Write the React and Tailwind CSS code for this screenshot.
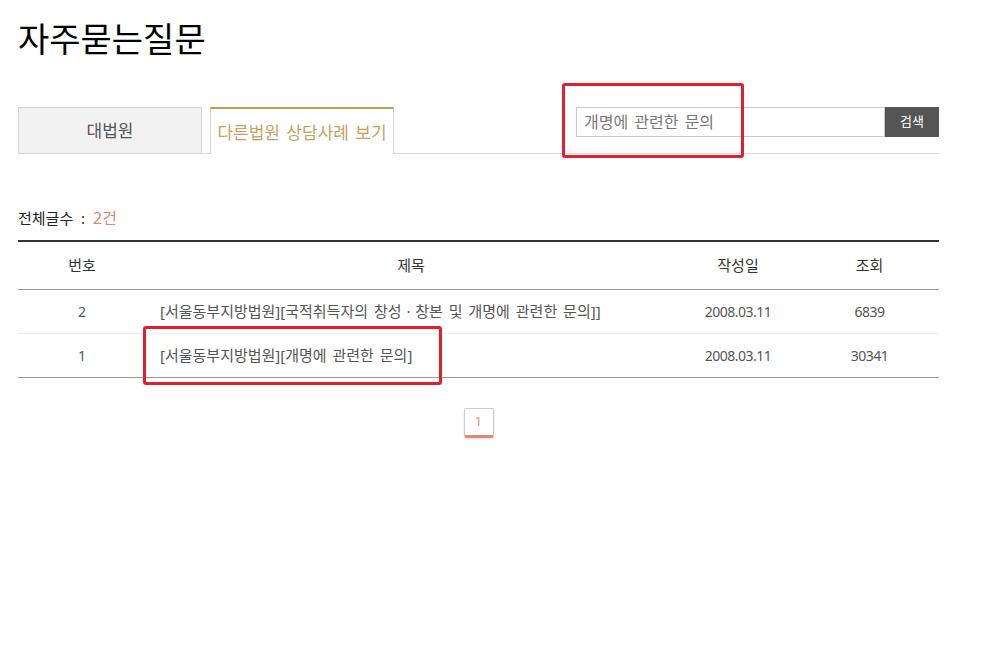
const rows = [
  { no: 2, title: "[서울동부지방법원][국적취득자의 창성ㆍ창본 및 개명에 관련한 문의]]", date: "2008.03.11", hits: "6839" },
  { no: 1, title: "[서울동부지방법원][개명에 관련한 문의]", date: "2008.03.11", hits: "30341" },
];

const App = () => {
  return (
    <div
      className="relative min-h-screen bg-white text-[#222]"
      style={{ fontFamily: '"Noto Sans", "Noto Sans CJK KR", sans-serif' }}
    >
      <div className="w-[921px] ml-[18px]">
        <h1 className="pt-[16px] text-[34px] leading-[46px] font-normal text-black">자주묻는질문</h1>

        <div className="mt-[45px] flex items-start border-b border-[#d8d8d8] h-[47px]">
          <div className="w-[184px] h-[47px] flex items-center justify-center bg-[#f2f2f2] border border-[#d5d5d5] text-[17px] text-[#555]">
            대법원
          </div>
          <div className="ml-[8px] w-[184px] h-[47px] flex items-center justify-center bg-white border-x border-[#d5d5d5] border-t-2 border-t-[#c39a55] text-[17px] text-[#c9a063] pt-[2px] [word-spacing:2px]">
            다른법원 상담사례 보기
          </div>
          <div className="ml-auto flex h-[30px]">
            <div className="w-[309px] h-[30px] border border-[#c8c8c8] flex items-center px-[7px] text-[16px] text-[#777] [word-spacing:2px]">
              개명에 관련한 문의
            </div>
            <button className="w-[54px] h-[30px] bg-[#555] text-white text-[13px]">검색</button>
          </div>
        </div>

        <div className="mt-[52px] text-[15px] text-[#222] [word-spacing:4px]">
          전체글수 : <span className="text-[16px] text-[#d98a7a]">2건</span>
        </div>

        <table className="mt-[10px] w-full border-t-2 border-[#333] border-collapse text-[14px]">
          <thead>
            <tr className="h-[48px] border-b border-[#999] text-[15px] text-[#333]">
              <th className="w-[128px] font-normal">번호</th>
              <th className="font-normal">제목</th>
              <th className="w-[124px] font-normal">작성일</th>
              <th className="w-[139px] font-normal">조회</th>
            </tr>
          </thead>
          <tbody className="text-[#555]">
            {rows.map((r, i) => (
              <tr
                key={r.no}
                className={
                  "h-[44px] border-b " + (i === rows.length - 1 ? "border-[#999]" : "border-[#eee]")
                }
              >
                <td className="text-center">{r.no}</td>
                <td className="pl-[14px] text-[15px] [word-spacing:2px]">{r.title}</td>
                <td className="text-center tracking-[-0.5px]">{r.date}</td>
                <td className="text-center tracking-[-0.5px]">{r.hits}</td>
              </tr>
            ))}
          </tbody>
        </table>

        <div className="mt-[30px] flex justify-center">
          <div className="w-[30px] h-[30px] border border-[#ccc] rounded-[2px] shadow-sm flex items-center justify-center text-[12px] text-[#d98a7a] border-b-[3px] border-b-[#e08878]">
            1
          </div>
        </div>
      </div>

      <div className="absolute left-[562px] top-[83px] w-[182px] h-[75px] border-[3px] border-[#e0202e] rounded-[3px]" />
      <div className="absolute left-[143px] top-[326px] w-[299px] h-[59px] border-[3px] border-[#e0202e] rounded-[3px]" />
    </div>
  );
};

export default App;
